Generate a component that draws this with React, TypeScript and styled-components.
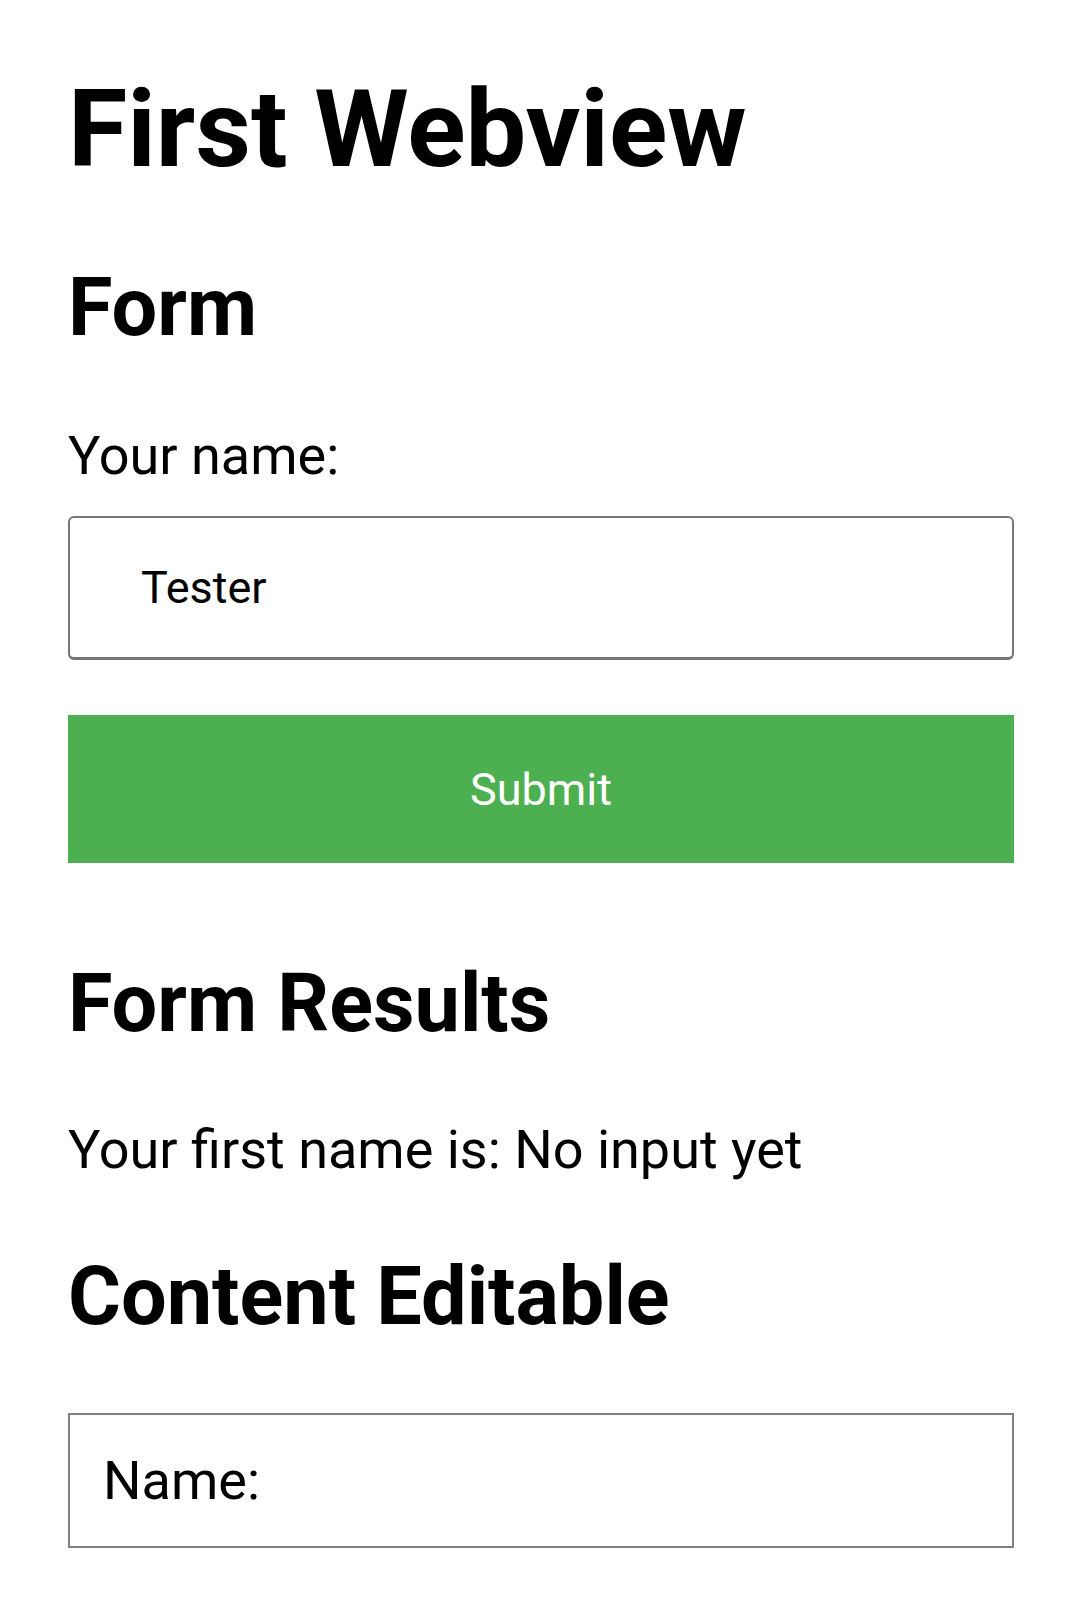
import React, { useState } from "react";
import styled, { createGlobalStyle } from "styled-components";

const GlobalStyle = createGlobalStyle`
  html, body {
    margin: 0;
    padding: 0;
    background: #ffffff;
  }
  body {
    font-family: Roboto, "Noto Sans", "Liberation Sans", sans-serif;
    color: #000000;
  }
  * { box-sizing: border-box; }
`;

const Page = styled.main`
  display: flex;
  flex-direction: column;
  align-items: stretch;
  padding: 66px 66px 40px 68px;
  min-height: 1624px;
`;

const Title = styled.h1`
  margin: 0;
  font-size: 108px;
  line-height: 127px;
  font-weight: 700;
  white-space: nowrap;
`;

const Heading = styled.h2<{ $top: number }>`
  margin: ${(p) => p.$top}px 0 0 0;
  font-size: 81px;
  line-height: 95px;
  font-weight: 700;
  white-space: nowrap;
`;

const Label = styled.label`
  display: block;
  margin-top: 69px;
  font-size: 54px;
  line-height: 63px;
  font-weight: 400;
`;

const TextInput = styled.input`
  display: block;
  width: 100%;
  height: 144px;
  margin-top: 29px;
  padding: 43px 71px;
  border: 2px solid #767676;
  border-bottom-width: 3px;
  border-radius: 6px;
  font-family: Roboto, "Noto Sans", sans-serif;
  font-size: 45px;
  line-height: 53px;
  color: #000000;
  background: #ffffff;
  outline: none;
`;

const SubmitButton = styled.button`
  display: block;
  width: 100%;
  height: 148px;
  margin-top: 55px;
  border: none;
  border-radius: 0;
  background: #4caf50;
  color: #ffffff;
  font-family: Roboto, "Noto Sans", sans-serif;
  font-size: 45px;
  line-height: 53px;
  font-weight: 400;
  cursor: pointer;
`;

const Result = styled.p`
  margin: 67px 0 0 0;
  font-size: 54px;
  line-height: 63px;
  white-space: nowrap;
`;

const Editable = styled.div`
  margin-top: 69px;
  height: 135px;
  padding: 34px 33px;
  border: 2px solid #808080;
  font-size: 54px;
  line-height: 63px;
  outline: none;
`;

export default function App() {
  const [name, setName] = useState("Tester");
  const [result, setResult] = useState("No input yet");

  return (
    <>
      <GlobalStyle />
      <Page>
        <Title>First Webview</Title>
        <Heading $top={67}>Form</Heading>
        <form
          onSubmit={(e) => {
            e.preventDefault();
            setResult(name || "No input yet");
          }}
        >
          <Label htmlFor="fname">Your name:</Label>
          <TextInput
            id="fname"
            type="text"
            value={name}
            onChange={(e) => setName(e.target.value)}
          />
          <SubmitButton type="submit">Submit</SubmitButton>
        </form>
        <Heading $top={93}>Form Results</Heading>
        <Result>Your first name is: {result}</Result>
        <Heading $top={68}>Content Editable</Heading>
        <Editable contentEditable suppressContentEditableWarning>
          Name:
        </Editable>
      </Page>
    </>
  );
}
